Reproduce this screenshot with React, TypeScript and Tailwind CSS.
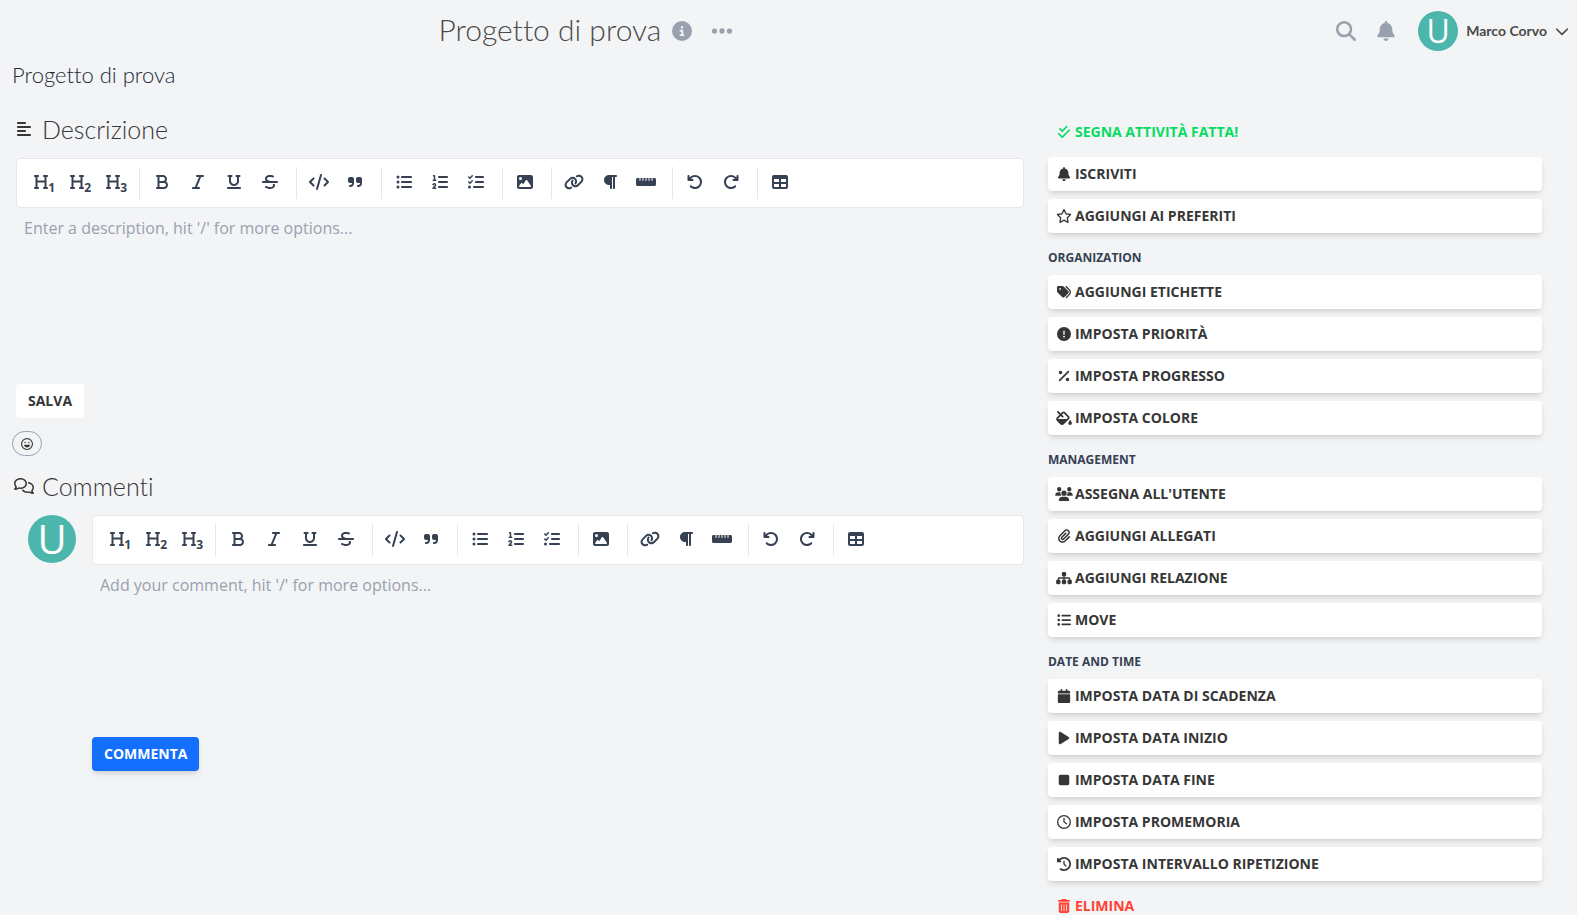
import type { ReactNode } from 'react';
import type { IconType } from 'react-icons';
import {
  FaAlignLeft,
  FaArrowRotateLeft,
  FaArrowRotateRight,
  FaBell,
  FaBold,
  FaCalendar,
  FaCheckDouble,
  FaChevronDown,
  FaCircleExclamation,
  FaCircleInfo,
  FaClockRotateLeft,
  FaCode,
  FaEllipsis,
  FaFillDrip,
  FaHeading,
  FaImage,
  FaItalic,
  FaLink,
  FaListCheck,
  FaListOl,
  FaListUl,
  FaMagnifyingGlass,
  FaPaperclip,
  FaParagraph,
  FaPercent,
  FaPlay,
  FaQuoteRight,
  FaRegClock,
  FaRegComments,
  FaRegFaceLaugh,
  FaRegStar,
  FaRulerHorizontal,
  FaSitemap,
  FaStop,
  FaStrikethrough,
  FaTable,
  FaTags,
  FaTrashCan,
  FaUnderline,
  FaUsers,
} from 'react-icons/fa6';

interface Tool {
  label: string;
  icon: IconType;
  level?: number;
}

const TOOL_GROUPS: Tool[][] = [
  [
    { label: 'Heading 1', icon: FaHeading, level: 1 },
    { label: 'Heading 2', icon: FaHeading, level: 2 },
    { label: 'Heading 3', icon: FaHeading, level: 3 },
  ],
  [
    { label: 'Bold', icon: FaBold },
    { label: 'Italic', icon: FaItalic },
    { label: 'Underline', icon: FaUnderline },
    { label: 'Strikethrough', icon: FaStrikethrough },
  ],
  [
    { label: 'Code', icon: FaCode },
    { label: 'Quote', icon: FaQuoteRight },
  ],
  [
    { label: 'Bullet list', icon: FaListUl },
    { label: 'Ordered list', icon: FaListOl },
    { label: 'Task list', icon: FaListCheck },
  ],
  [{ label: 'Image', icon: FaImage }],
  [
    { label: 'Link', icon: FaLink },
    { label: 'Text', icon: FaParagraph },
    { label: 'Horizontal rule', icon: FaRulerHorizontal },
  ],
  [
    { label: 'Undo', icon: FaArrowRotateLeft },
    { label: 'Redo', icon: FaArrowRotateRight },
  ],
  [{ label: 'Table', icon: FaTable }],
];

interface Action {
  label: string;
  icon: IconType;
}

const ACTION_GROUPS: { title?: string; actions: Action[] }[] = [
  {
    actions: [
      { label: 'Iscriviti', icon: FaBell },
      { label: 'Aggiungi ai preferiti', icon: FaRegStar },
    ],
  },
  {
    title: 'Organization',
    actions: [
      { label: 'Aggiungi etichette', icon: FaTags },
      { label: 'Imposta priorità', icon: FaCircleExclamation },
      { label: 'Imposta progresso', icon: FaPercent },
      { label: 'Imposta colore', icon: FaFillDrip },
    ],
  },
  {
    title: 'Management',
    actions: [
      { label: "Assegna all'utente", icon: FaUsers },
      { label: 'Aggiungi allegati', icon: FaPaperclip },
      { label: 'Aggiungi relazione', icon: FaSitemap },
      { label: 'Move', icon: FaListUl },
    ],
  },
  {
    title: 'Date and time',
    actions: [
      { label: 'Imposta data di scadenza', icon: FaCalendar },
      { label: 'Imposta data inizio', icon: FaPlay },
      { label: 'Imposta data fine', icon: FaStop },
      { label: 'Imposta promemoria', icon: FaRegClock },
      { label: 'Imposta intervallo ripetizione', icon: FaClockRotateLeft },
    ],
  },
];

function Toolbar() {
  return (
    <div className="flex h-[50px] items-center rounded border border-gray-200 bg-white pl-0.5 text-gray-700">
      {TOOL_GROUPS.map((group, i) => (
        <div
          key={i}
          className="flex h-8 shrink-0 border-r border-gray-200 pr-2 pl-1 last:border-r-0"
        >
          {group.map(({ label, icon: Icon, level }) => (
            <button
              key={label}
              type="button"
              aria-label={label}
              className="relative flex w-9 items-center justify-center pb-0.5"
            >
              {/* w-5 leaves room for the wide glyphs at full height */}
              <Icon className="h-4 w-5 shrink-0" />
              {level && (
                <span className="absolute right-1 bottom-[3px] text-xs font-bold">{level}</span>
              )}
            </button>
          ))}
        </div>
      ))}
    </div>
  );
}

function Editor({ label, placeholder }: { label: string; placeholder: string }) {
  return (
    <div>
      <Toolbar />
      <textarea
        aria-label={label}
        placeholder={placeholder}
        className="block h-[164px] w-full resize-none bg-transparent px-2 py-2 text-base text-gray-700 outline-none placeholder:text-gray-400"
      />
    </div>
  );
}

function ActionButton({
  icon: Icon,
  className,
  children,
}: {
  icon: IconType;
  className: string;
  children: ReactNode;
}) {
  return (
    <button
      type="button"
      className={`mb-2 flex h-[34px] w-full items-center gap-[3px] rounded px-2 text-sm font-bold uppercase ${className}`}
    >
      <span className="flex w-4 justify-center">
        <Icon className="h-3.5 w-[18px] shrink-0" />
      </span>
      {children}
    </button>
  );
}

function Header() {
  return (
    <header className="flex h-[62px] shrink-0 items-center justify-between pr-2 text-gray-400">
      <div className="flex w-3/4 items-center justify-center">
        <h1 className="pb-1 font-[Lato] text-[30px] leading-9 font-light text-[#4a4a4a] [font-variant-ligatures:none]">
          Progetto di prova
        </h1>
        <a href="#info" aria-label="Info" className="ml-[11px]">
          <FaCircleInfo className="size-5" />
        </a>
        <button type="button" aria-label="Menu" className="pr-1 pl-[18px]">
          <FaEllipsis className="size-6" />
        </button>
      </div>
      <div className="flex shrink-0 items-center">
        <button type="button" aria-label="Cerca">
          <FaMagnifyingGlass className="size-5" />
        </button>
        <button type="button" aria-label="Notifiche" className="mr-[22px] ml-5">
          <FaBell className="size-5" />
        </button>
        <button
          type="button"
          className="flex items-center font-[Lato] text-sm font-bold text-[#4a4a4a]"
        >
          <Avatar className="size-10 text-[32px]" />
          <span className="mx-2">Marco Corvo</span>
          <FaChevronDown className="size-3.5" />
        </button>
      </div>
    </header>
  );
}

function Avatar({ className }: { className: string }) {
  return (
    <span
      className={`flex shrink-0 items-center justify-center rounded-full bg-[#4db6ac] font-['Open_Sans'] leading-none font-normal text-white ${className}`}
    >
      U
    </span>
  );
}

function SectionTitle({ className = '', children }: { className?: string; children: ReactNode }) {
  return (
    <h3
      className={`mb-[15px] flex h-7 items-center font-[Lato] text-[25px] leading-7 font-light [font-variant-ligatures:none] ${className}`}
    >
      {children}
    </h3>
  );
}

export default function App() {
  return (
    <div className="flex h-screen flex-col overflow-hidden bg-gray-100 font-['Open_Sans',sans-serif] text-[#363636]">
      <Header />
      <main className="flex min-h-0 flex-1 flex-col overflow-y-auto pr-[23px] [scrollbar-width:none]">
        <h2 className="px-3 font-[Lato] text-[22px] leading-[26px] font-light text-[#1f2937] [font-variant-ligatures:none]">
          Progetto di prova
        </h2>
        <div className="flex items-start pt-[27px]">
          <div className="w-2/3 px-3">
            <section className="pl-1">
              <SectionTitle>
                <FaAlignLeft className="mr-2.5 size-4" />
                Descrizione
              </SectionTitle>
              <Editor
                label="Descrizione"
                placeholder="Enter a description, hit '/' for more options..."
              />
              <button
                type="button"
                className="mt-3 h-[34px] rounded bg-white px-3 text-sm font-bold uppercase"
              >
                Salva
              </button>
            </section>
            <button
              type="button"
              aria-label="Aggiungi reazione"
              className="mt-[13px] flex h-[25px] w-[30px] items-center justify-center rounded-full border border-gray-400"
            >
              <FaRegFaceLaugh className="size-3" />
            </button>
            <section>
              <SectionTitle className="mt-4">
                <FaRegComments className="mr-2 ml-0.5 h-4 w-5" />
                Commenti
              </SectionTitle>
              <div className="flex items-start pl-4">
                <Avatar className="size-12 text-[40px]" />
                <div className="ml-4 flex-1">
                  <Editor
                    label="Commento"
                    placeholder="Add your comment, hit '/' for more options..."
                  />
                  <button
                    type="button"
                    className="mt-2 h-[34px] rounded bg-[#146fff] px-3 text-sm font-bold text-white uppercase shadow-md"
                  >
                    Commenta
                  </button>
                </div>
              </div>
            </section>
          </div>
          <aside className="w-1/3 px-3">
            <ActionButton icon={FaCheckDouble} className="text-[#06db62]">
              Segna attività fatta!
            </ActionButton>
            {ACTION_GROUPS.map(({ title, actions }, i) => (
              <div key={i}>
                {title && (
                  <h4 className="py-2 text-xs leading-[18px] font-bold text-gray-700 uppercase">
                    {title}
                  </h4>
                )}
                {actions.map(({ label, icon }) => (
                  <ActionButton key={label} icon={icon} className="bg-white shadow-md">
                    {label}
                  </ActionButton>
                ))}
              </div>
            ))}
            <ActionButton icon={FaTrashCan} className="text-[#ff4136]">
              Elimina
            </ActionButton>
          </aside>
        </div>
      </main>
    </div>
  );
}
